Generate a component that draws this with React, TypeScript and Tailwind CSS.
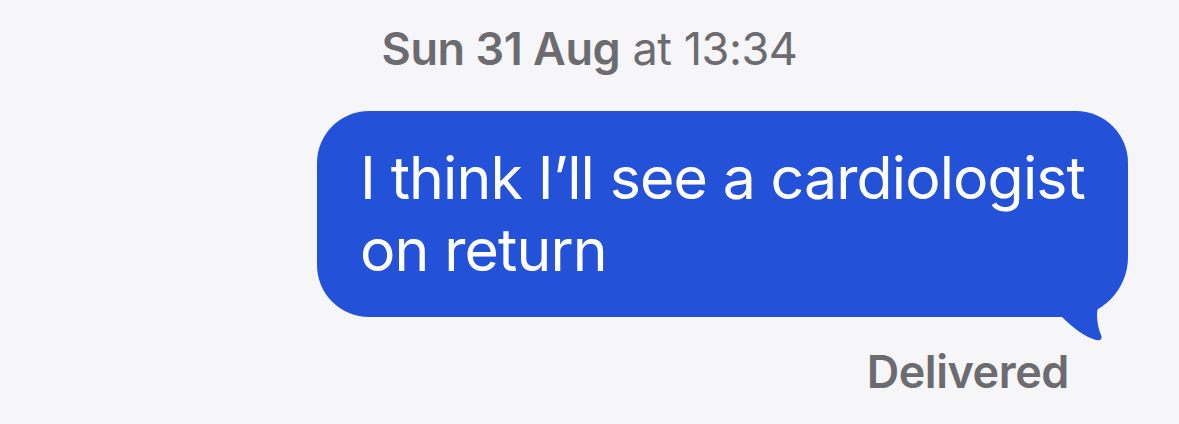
import React from 'react';

const font = { fontFamily: 'Inter, "Noto Sans", sans-serif' };

const Tail: React.FC = () => (
  <svg
    className="absolute left-[723px] top-[139px]"
    width="92"
    height="94"
    viewBox="0 0 92 94"
    fill="none"
  >
    <path
      d="M10 55 L62 38 C62 50 57 56 57 65 C57 73 59 80 61 85 C63 89 60 91 56 90 C45 87 33 78 22 67 L10 67 Z"
      fill="#2352d9"
    />
  </svg>
);

const App: React.FC = () => {
  return (
    <div className="w-[1179px] h-[424px] bg-[#f6f6f8] flex flex-col overflow-hidden" style={font}>
      <div className="pt-[23px] text-center text-[45px] leading-[52px] text-[#6c6c70] tracking-[-0.01em]">
        <span className="font-semibold">Sun 31 Aug</span> at 13:34
      </div>

      <div className="self-end mr-[51px] mt-[36px] relative">
        <div className="w-[811px] bg-[#2352d9] rounded-[52px] rounded-br-[60px] pl-[43px] pr-[20px] py-[31px] text-white text-[59px] leading-[72px] tracking-[-0.015em]">
          I think I’ll see a cardiologist on return
        </div>
        <Tail />
      </div>

      <div className="self-end mr-[110px] mt-[29px] text-[45px] leading-[52px] font-semibold text-[#6c6c70] tracking-[-0.01em]">
        Delivered
      </div>
    </div>
  );
};

export default App;
